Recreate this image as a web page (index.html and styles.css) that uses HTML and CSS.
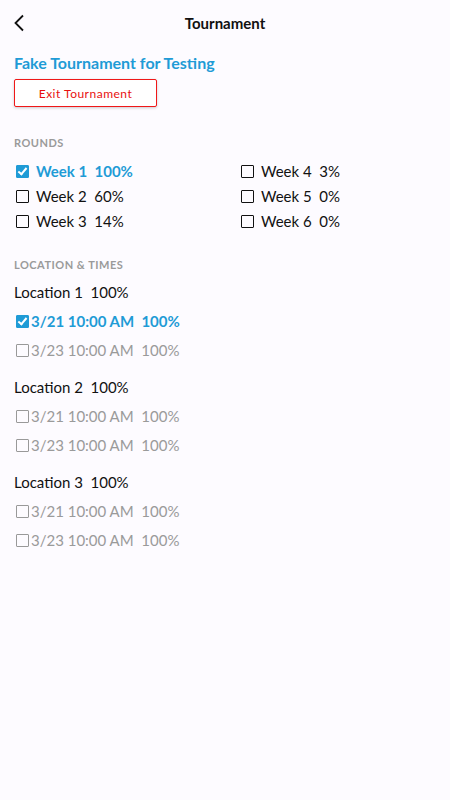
FILE: index.html
```html
<!DOCTYPE html>
<html>

<head>
	<meta charset="utf-8">
	<link rel="stylesheet" href="styles.css">
</head>

<body>
	<div class="header">
		<span class="back">
			<svg width="12" height="18" viewBox="0 0 12 18"><path d="M10 1.5 L2.5 9 L10 16.5" fill="none" stroke="#111" stroke-width="1.8"/></svg>
		</span>
		<span class="header-title">Tournament</span>
	</div>

	<div class="content">
		<div class="tourney-name">Fake Tournament for Testing</div>
		<button class="exit-btn">Exit Tournament</button>

		<div class="section-label">ROUNDS</div>
		<div class="rounds">
			<label class="round active"><span class="box checked"></span>Week 1&nbsp; 100%</label>
			<label class="round"><span class="box"></span>Week 4&nbsp; 3%</label>
			<label class="round"><span class="box"></span>Week 2&nbsp; 60%</label>
			<label class="round"><span class="box"></span>Week 5&nbsp; 0%</label>
			<label class="round"><span class="box"></span>Week 3&nbsp; 14%</label>
			<label class="round"><span class="box"></span>Week 6&nbsp; 0%</label>
		</div>

		<div class="section-label locations-label">LOCATION &amp; TIMES</div>

		<div class="location">
			<div class="loc-name">Location 1&nbsp; 100%</div>
			<label class="slot active"><span class="box checked"></span>3/21 10:00 AM&nbsp; 100%</label>
			<label class="slot"><span class="box"></span>3/23 10:00 AM&nbsp; 100%</label>
		</div>
		<div class="location">
			<div class="loc-name">Location 2&nbsp; 100%</div>
			<label class="slot"><span class="box"></span>3/21 10:00 AM&nbsp; 100%</label>
			<label class="slot"><span class="box"></span>3/23 10:00 AM&nbsp; 100%</label>
		</div>
		<div class="location">
			<div class="loc-name">Location 3&nbsp; 100%</div>
			<label class="slot"><span class="box"></span>3/21 10:00 AM&nbsp; 100%</label>
			<label class="slot"><span class="box"></span>3/23 10:00 AM&nbsp; 100%</label>
		</div>
	</div>
</body>

</html>
```

FILE: styles.css
```css
body {
	margin: 0;
	background: #fdfbff;
	color: #111;
	font-family: Lato, "Noto Sans", sans-serif;
}

.header {
	height: 46px;
	display: flex;
	align-items: center;
	justify-content: center;
	position: relative;
}

.back {
	position: absolute;
	left: 13px;
	top: 14px;
}

.header-title {
	font-size: 15px;
	font-weight: 700;
}

.content {
	padding: 7px 14px 0;
}

.tourney-name {
	color: #1f9bd6;
	font-size: 16px;
	font-weight: 700;
	line-height: 20px;
}

.exit-btn {
	display: block;
	margin-top: 6px;
	width: 143px;
	height: 28px;
	background: #fff;
	border: 1px solid #f01818;
	border-radius: 2px;
	color: #e81010;
	font-family: inherit;
	font-size: 12px;
	letter-spacing: 0.5px;
	box-shadow: 0 1px 3px rgba(0, 0, 0, 0.2);
}

.section-label {
	margin-top: 29px;
	color: #9a9a9a;
	font-size: 11px;
	font-weight: 700;
	letter-spacing: 0.5px;
}

.rounds {
	margin-top: 12px;
	display: grid;
	grid-template-columns: 225px 1fr;
	row-gap: 5px;
}

.round {
	display: flex;
	align-items: center;
	font-size: 15px;
	line-height: 20px;
}

.round .box {
	margin: 0 7px 0 2px;
	border-color: #111;
}

.round.active {
	color: #1f9bd6;
	font-weight: 700;
}

.box {
	width: 11px;
	height: 11px;
	border: 1.5px solid #999;
	border-radius: 1px;
	flex-shrink: 0;
	position: relative;
}

.box.checked {
	background: #1f9bd6;
	border-color: #1f9bd6 !important;
}

.box.checked::after {
	content: "";
	position: absolute;
	left: 3px;
	top: 0px;
	width: 3px;
	height: 7px;
	border: solid #fff;
	border-width: 0 2px 2px 0;
	transform: rotate(40deg);
}

.locations-label {
	margin-top: 27px;
}

.location {
	margin-top: 11px;
}

.location + .location {
	margin-top: 17px;
}

.loc-name {
	font-size: 15px;
	line-height: 20px;
}

.slot {
	display: flex;
	align-items: center;
	margin-top: 9px;
	font-size: 15px;
	line-height: 20px;
	color: #9a9a9a;
}

.slot .box {
	margin: 0 2px 0 2px;
}

.slot.active {
	color: #1f9bd6;
	font-weight: 700;
}
```
